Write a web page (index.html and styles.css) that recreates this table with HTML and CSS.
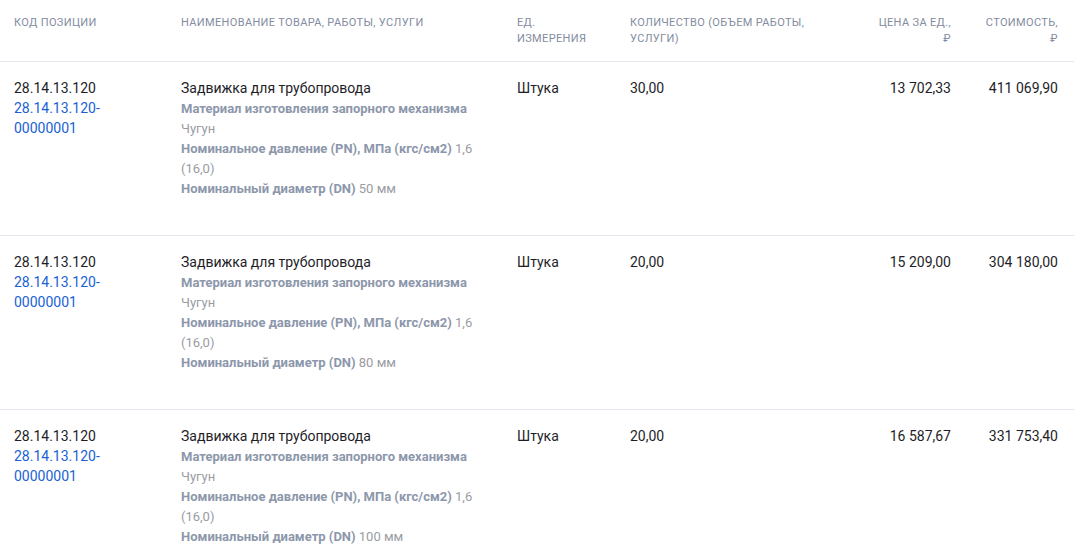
FILE: index.html
```html
<!DOCTYPE html>
<html lang="ru">
<head>
<meta charset="utf-8">
<title>Позиции</title>
<link rel="stylesheet" href="styles.css">
</head>
<body>
<div class="table">
  <div class="row head">
    <div class="cell">Код позиции</div>
    <div class="cell">Наименование товара, работы, услуги</div>
    <div class="cell c3">Ед. измерения</div>
    <div class="cell">Количество (объем работы, услуги)</div>
    <div class="cell num c5">Цена за ед., ₽</div>
    <div class="cell num c6">Стоимость, ₽</div>
  </div>

  <div class="row item">
    <div class="cell c1">28.14.13.120<br><a class="code" href="#">28.14.13.120-<wbr>00000001</a></div>
    <div class="cell c2">
      <div class="name">Задвижка для трубопровода</div>
      <div class="param"><b>Материал изготовления запорного механизма</b> Чугун</div>
      <div class="param"><b>Номинальное давление (PN), МПа (кгс/см2)</b> 1,6 (16,0)</div>
      <div class="param"><b>Номинальный диаметр (DN)</b> 50 мм</div>
    </div>
    <div class="cell c3">Штука</div>
    <div class="cell">30,00</div>
    <div class="cell num c5">13 702,33</div>
    <div class="cell num c6">411 069,90</div>
  </div>

  <div class="row item">
    <div class="cell c1">28.14.13.120<br><a class="code" href="#">28.14.13.120-<wbr>00000001</a></div>
    <div class="cell c2">
      <div class="name">Задвижка для трубопровода</div>
      <div class="param"><b>Материал изготовления запорного механизма</b> Чугун</div>
      <div class="param"><b>Номинальное давление (PN), МПа (кгс/см2)</b> 1,6 (16,0)</div>
      <div class="param"><b>Номинальный диаметр (DN)</b> 80 мм</div>
    </div>
    <div class="cell c3">Штука</div>
    <div class="cell">20,00</div>
    <div class="cell num c5">15 209,00</div>
    <div class="cell num c6">304 180,00</div>
  </div>

  <div class="row item">
    <div class="cell c1">28.14.13.120<br><a class="code" href="#">28.14.13.120-<wbr>00000001</a></div>
    <div class="cell c2">
      <div class="name">Задвижка для трубопровода</div>
      <div class="param"><b>Материал изготовления запорного механизма</b> Чугун</div>
      <div class="param"><b>Номинальное давление (PN), МПа (кгс/см2)</b> 1,6 (16,0)</div>
      <div class="param"><b>Номинальный диаметр (DN)</b> 100 мм</div>
    </div>
    <div class="cell c3">Штука</div>
    <div class="cell">20,00</div>
    <div class="cell num c5">16 587,67</div>
    <div class="cell num c6">331 753,40</div>
  </div>
</div>
</body>
</html>
```

FILE: styles.css
```css
html, body {
  margin: 0;
  padding: 0;
  background: #fff;
}
body {
  font-family: Roboto, "Liberation Sans", Arial, sans-serif;
  color: #1e1e28;
  width: 1074px;
  overflow: hidden;
}
.row {
  display: grid;
  grid-template-columns: 167px 336px 113px 214px 121px 123px;
  border-bottom: 1px solid #e5e6ee;
}
.cell {
  padding-left: 14px;
  min-width: 0;
}
.cell.c1 {
  padding-right: 43px;
}
.cell.c3 {
  padding-right: 22px;
}
.cell.num {
  text-align: right;
}
.cell.c5 {
  padding-left: 42px;
}
.cell.c6 {
  padding-left: 31px;
  padding-right: 16px;
}
.head {
  padding: 15px 0 14px;
}
.head .cell {
  font-size: 11px;
  line-height: 16px;
  text-transform: uppercase;
  letter-spacing: 0.35px;
  color: #838ca0;
}
.item {
  padding: 16px 0 36px;
}
.item .cell {
  font-size: 14px;
  line-height: 20px;
}
.name {
  margin-bottom: 1px;
}
.code {
  color: #1a5fd6;
  text-decoration: none;
}
.item .cell.c2 {
  padding-right: 12px;
}
.param {
  font-size: 13px;
  line-height: 20px;
  color: #9a9ca3;
}
.param b {
  font-weight: 700;
  color: #8d97ab;
}
```
